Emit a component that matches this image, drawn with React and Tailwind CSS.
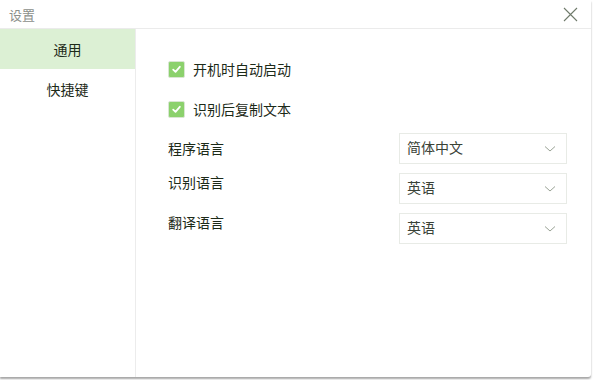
import React from "react";

const font = { fontFamily: '"Noto Sans CJK SC", "Noto Sans", sans-serif' };

function Check() {
  return (
    <div className="w-[17px] h-[17px] rounded-[2px] bg-[#8bd16c] border border-[#d9e6d3] flex items-center justify-center">
      <svg width="11" height="11" viewBox="0 0 11 11">
        <path d="M2.2 5.6 L4.5 7.8 L8.8 2.8" fill="none" stroke="#ffffff" strokeWidth="1.8" strokeLinecap="round" strokeLinejoin="round" />
      </svg>
    </div>
  );
}

function Select({ value }) {
  return (
    <div className="w-[168px] h-[31px] border border-[#e8ebe6] bg-white flex items-center justify-between pl-[7px] pr-[10px]">
      <span className="text-[14px] text-[#3a4237] leading-none -mt-[3px]">{value}</span>
      <svg width="12" height="8" viewBox="0 0 12 8">
        <path d="M1 1.5 L6 6 L11 1.5" fill="none" stroke="#9aa396" strokeWidth="1" />
      </svg>
    </div>
  );
}

export default function App() {
  return (
    <div className="w-[593px] h-[380px] bg-white relative overflow-hidden" style={font}>
      <div className="w-[591px] h-[377px] bg-white flex flex-col shadow-[0_2px_2px_rgba(0,0,0,0.35)] rounded-br-[3px]">
        <div className="h-[29px] flex items-center justify-between border-b border-[#ebebeb] pl-[9px] pr-[13px] shrink-0">
          <span className="text-[13px] text-[#8c8f8a] leading-none">设置</span>
          <svg width="15" height="15" viewBox="0 0 15 15">
            <path d="M1 1 L14 14 M14 1 L1 14" stroke="#6f7a6b" strokeWidth="1.1" />
          </svg>
        </div>
        <div className="flex flex-1">
          <div className="w-[136px] border-r border-[#ececec] flex flex-col shrink-0">
            <div className="h-[40px] bg-[#dcf0d4] flex items-center justify-center text-[14px] text-[#1c2a18]">通用</div>
            <div className="h-[40px] flex items-center justify-center text-[14px] text-[#1c2a18]">快捷键</div>
          </div>
          <div className="flex-1 pl-[32px] pt-[31px] text-[#1c2a18] text-[14px]">
            <div className="flex items-center gap-[8px] h-[19px]">
              <Check />
              <span className="leading-none -mt-[2px]">开机时自动启动</span>
            </div>
            <div className="flex items-center gap-[8px] h-[19px] mt-[21px]">
              <Check />
              <span className="leading-none -mt-[2px]">识别后复制文本</span>
            </div>
            <div className="mt-[14px] flex flex-col gap-[9px]">
              <div className="flex items-start">
                <span className="w-[231px] pt-[6px] leading-[18px]">程序语言</span>
                <Select value="简体中文" />
              </div>
              <div className="flex items-start">
                <span className="w-[231px] pt-0 leading-[18px]">识别语言</span>
                <Select value="英语" />
              </div>
              <div className="flex items-start">
                <span className="w-[231px] pt-0 leading-[18px]">翻译语言</span>
                <Select value="英语" />
              </div>
            </div>
          </div>
        </div>
      </div>
    </div>
  );
}
